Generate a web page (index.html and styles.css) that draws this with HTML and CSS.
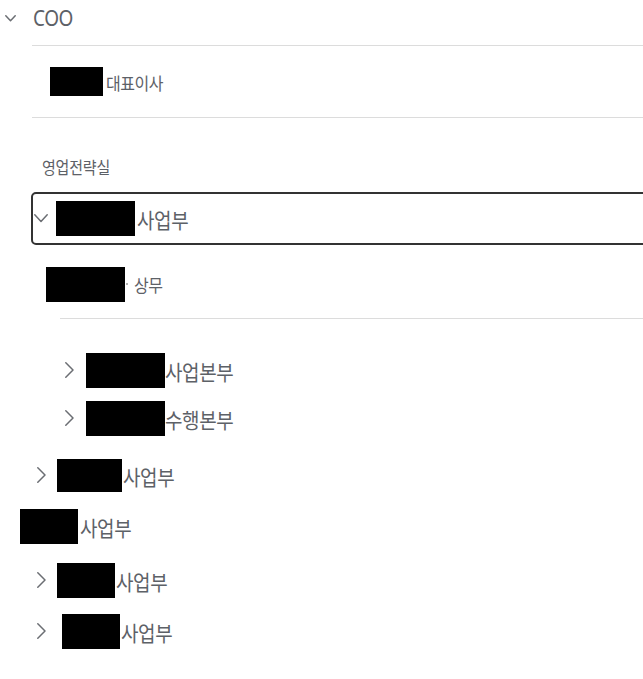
FILE: index.html
```html
<!DOCTYPE html>
<html>
  <head>
    <meta charset="UTF-8">
    <title>조직도</title>
    <link rel="stylesheet" href="styles.css">
  </head>
  <body>
    <div class="tree">
      <div class="row row-root">
        <svg class="chev-down-sm" width="11" height="7" viewBox="0 0 11 7"><path d="M0.8 0.8 L5.5 5.8 L10.2 0.8"/></svg>
        <span class="label label-coo">COO</span>
      </div>
      <div class="divider"></div>

      <div class="row row-ceo">
        <span class="mask mask-xs"></span>
        <span class="label label-sm">대표이사</span>
      </div>
      <div class="divider"></div>

      <div class="section">
        <div class="row row-group">
          <span class="label label-xs">영업전략실</span>
        </div>

        <div class="row row-focus">
          <svg class="chev-down" width="14" height="9" viewBox="0 0 14 9"><path d="M0.8 0.8 L7 7.5 L13.2 0.8"/></svg>
          <span class="mask mask-l"></span>
          <span class="label">사업부</span>
        </div>

        <div class="row row-exec">
          <span class="mask mask-l"></span>
          <span class="dot"></span>
          <span class="label label-exec">상무</span>
        </div>
        <div class="divider divider-inner"></div>

        <div class="row row-sub">
          <svg class="chev-right" width="9" height="16" viewBox="0 0 9 16"><path d="M0.8 0.8 L8 8 L0.8 15.2"/></svg>
          <span class="mask mask-l"></span>
          <span class="label">사업본부</span>
        </div>
        <div class="row row-sub">
          <svg class="chev-right" width="9" height="16" viewBox="0 0 9 16"><path d="M0.8 0.8 L8 8 L0.8 15.2"/></svg>
          <span class="mask mask-l"></span>
          <span class="label">수행본부</span>
        </div>
      </div>

      <div class="row row-top gap-a">
        <svg class="chev-right" width="9" height="16" viewBox="0 0 9 16"><path d="M0.8 0.8 L8 8 L0.8 15.2"/></svg>
        <span class="mask mask-m"></span>
        <span class="label">사업부</span>
      </div>
      <div class="row row-leaf gap-b">
        <span class="mask mask-s"></span>
        <span class="label">사업부</span>
      </div>
      <div class="row row-top gap-c">
        <svg class="chev-right" width="9" height="16" viewBox="0 0 9 16"><path d="M0.8 0.8 L8 8 L0.8 15.2"/></svg>
        <span class="mask mask-s"></span>
        <span class="label">사업부</span>
      </div>
      <div class="row row-top row-last gap-b">
        <svg class="chev-right" width="9" height="16" viewBox="0 0 9 16"><path d="M0.8 0.8 L8 8 L0.8 15.2"/></svg>
        <span class="mask mask-s"></span>
        <span class="label">사업부</span>
      </div>
    </div>
  </body>
</html>
```

FILE: styles.css
```css
body {
  margin: 0;
  padding: 0;
  background-color: #fff;
  font-family: "Noto Sans CJK KR", "Noto Sans", sans-serif;
  color: #5d6167;
  overflow: hidden;
}

.tree {
  width: 643px;
}

.row {
  display: flex;
  align-items: center;
  height: 48px;
}

svg path {
  fill: none;
  stroke: #6b6e73;
  stroke-width: 1.5;
  stroke-linecap: round;
  stroke-linejoin: round;
}

.label {
  font-size: 19px;
  line-height: 1;
  white-space: nowrap;
  letter-spacing: -0.4px;
  transform: scaleY(1.1);
}

.label-sm {
  font-size: 16px;
  letter-spacing: -0.5px;
}

.label-xs {
  font-size: 15px;
  letter-spacing: -0.2px;
}

.label-exec {
  font-size: 16px;
}

.label-coo {
  font-family: "Noto Sans", sans-serif;
  font-size: 19px;
  letter-spacing: -0.5px;
}

.mask {
  display: inline-block;
  height: 35px;
  background-color: #000;
}

.mask-xs { width: 53px; height: 29px; }
.mask-s { width: 58px; }
.mask-m { width: 65px; height: 33px; }
.mask-l { width: 79px; }

.divider {
  height: 1px;
  margin-left: 32px;
  background-color: #dcdcdc;
}

.divider-inner {
  margin-left: 60px;
}

/* top level */
.row-root {
  height: 36px;
  padding-left: 5px;
  margin-bottom: 9px;
}

.row-root .chev-down-sm {
  margin-right: 17px;
  margin-top: 1px;
}

.row-ceo {
  height: 71px;
  padding-left: 50px;
}

.row-ceo .label {
  margin-left: 3px;
}

.section {
  padding-top: 28px;
}

.row-group {
  height: 40px;
  padding-left: 42px;
  margin-bottom: 6px;
}

.row-focus {
  height: 49px;
  margin-left: 31px;
  margin-right: -12px;
  padding-left: 1px;
  border: 2px solid #333;
  border-radius: 5px;
}

.row-focus .chev-down {
  margin-right: 8px;
}

.row-focus .label {
  margin-left: 2px;
}

.row-exec {
  height: 68px;
  margin-top: 5px;
  padding-left: 46px;
}

.dot {
  width: 2px;
  height: 2px;
  margin: 0 6px 0 1px;
  border-radius: 50%;
  background-color: #999;
}

.row-sub {
  padding-left: 65px;
}

.divider-inner + .row-sub {
  margin-top: 27px;
}

.row-sub .chev-right {
  margin-right: 12px;
}

.row-top {
  padding-left: 37px;
}

.row-top .chev-right {
  margin-right: 11px;
}

.row-top .label {
  margin-left: 1px;
}

.row-leaf {
  padding-left: 20px;
}

.row-leaf .label {
  margin-left: 2px;
}

.row-last .mask {
  margin-left: 5px;
}

.gap-a { margin-top: 9px; }
.gap-b { margin-top: 3px; }
.gap-c { margin-top: 6px; }
```
